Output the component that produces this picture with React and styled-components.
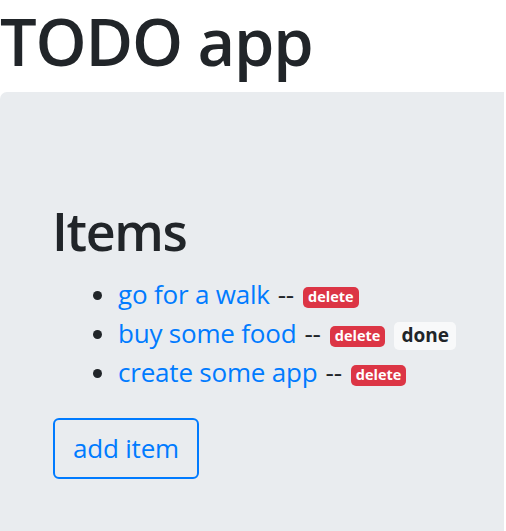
import React from "react";
import styled, { createGlobalStyle } from "styled-components";

const GlobalStyle = createGlobalStyle`
  html, body {
    margin: 0;
    padding: 0;
    background: #fff;
  }
  body {
    font-family: "Open Sans", "Noto Sans", "Liberation Sans", sans-serif;
    font-size: 26px;
    line-height: 1.5;
    color: #212529;
    overflow: hidden;
  }
`;

const items = [
  { id: 1, text: "go for a walk", done: false },
  { id: 2, text: "buy some food", done: true },
  { id: 3, text: "create some app", done: false },
];

function App() {
  return (
    <Page>
      <GlobalStyle />
      <Title>TODO app</Title>
      <Jumbotron>
        <Heading>Items</Heading>
        <List>
          {items.map((item) => (
            <Item key={item.id}>
              <ItemLink href="#">{item.text}</ItemLink>
              <Sep>--</Sep>
              <Badge $variant="danger">delete</Badge>
              {item.done && <Badge $variant="light">done</Badge>}
            </Item>
          ))}
        </List>
        <OutlineButton type="button">add item</OutlineButton>
      </Jumbotron>
    </Page>
  );
}

const Page = styled.div`
  width: 506px;
  height: 531px;
  overflow: hidden;
`;

const Title = styled.h1`
  margin: 0 0 9px;
  font-size: 65px;
  font-weight: 600;
  line-height: 83px;
  letter-spacing: -1.2px;
  white-space: nowrap;
`;

const Jumbotron = styled.div`
  width: 504px;
  box-sizing: border-box;
  min-height: 440px;
  padding: 108px 52px 52px;
  background-color: #e9ecef;
  border-top-left-radius: 7px;
`;

const Heading = styled.h2`
  margin: 0 0 13px;
  font-size: 52px;
  font-weight: 600;
  line-height: 1.2;
  letter-spacing: -1.4px;
`;

const List = styled.ul`
  margin: 0 0 26px;
  padding-left: 66px;
`;

const Item = styled.li`
  line-height: 39px;
  white-space: nowrap;
  letter-spacing: -0.2px;
`;

const ItemLink = styled.a`
  color: #007bff;
  text-decoration: none;
`;

const Sep = styled.span`
  margin: 0 9px 0 8px;
`;

const Badge = styled.span`
  display: inline-block;
  vertical-align: ${(p) => (p.$variant === "light" ? "1px" : "2px")};
  font-weight: 700;
  line-height: 1;
  letter-spacing: 0;
  white-space: nowrap;
  font-size: ${(p) => (p.$variant === "light" ? "19px" : "14.5px")};
  padding: ${(p) => (p.$variant === "light" ? "4.5px 7px" : "3.5px 5px")};
  border-radius: 5px;
  margin-right: 9px;
  color: ${(p) => (p.$variant === "light" ? "#212529" : "#fff")};
  background-color: ${(p) => (p.$variant === "light" ? "#f8f9fa" : "#dc3545")};
`;

const OutlineButton = styled.button`
  display: inline-block;
  font-family: inherit;
  font-size: 26px;
  line-height: 39px;
  letter-spacing: -0.2px;
  padding: 9px 18px;
  margin-left: 1px;
  color: #007bff;
  background: transparent;
  border: 2px solid #007bff;
  border-radius: 6px;
  cursor: pointer;
`;

export default App;
